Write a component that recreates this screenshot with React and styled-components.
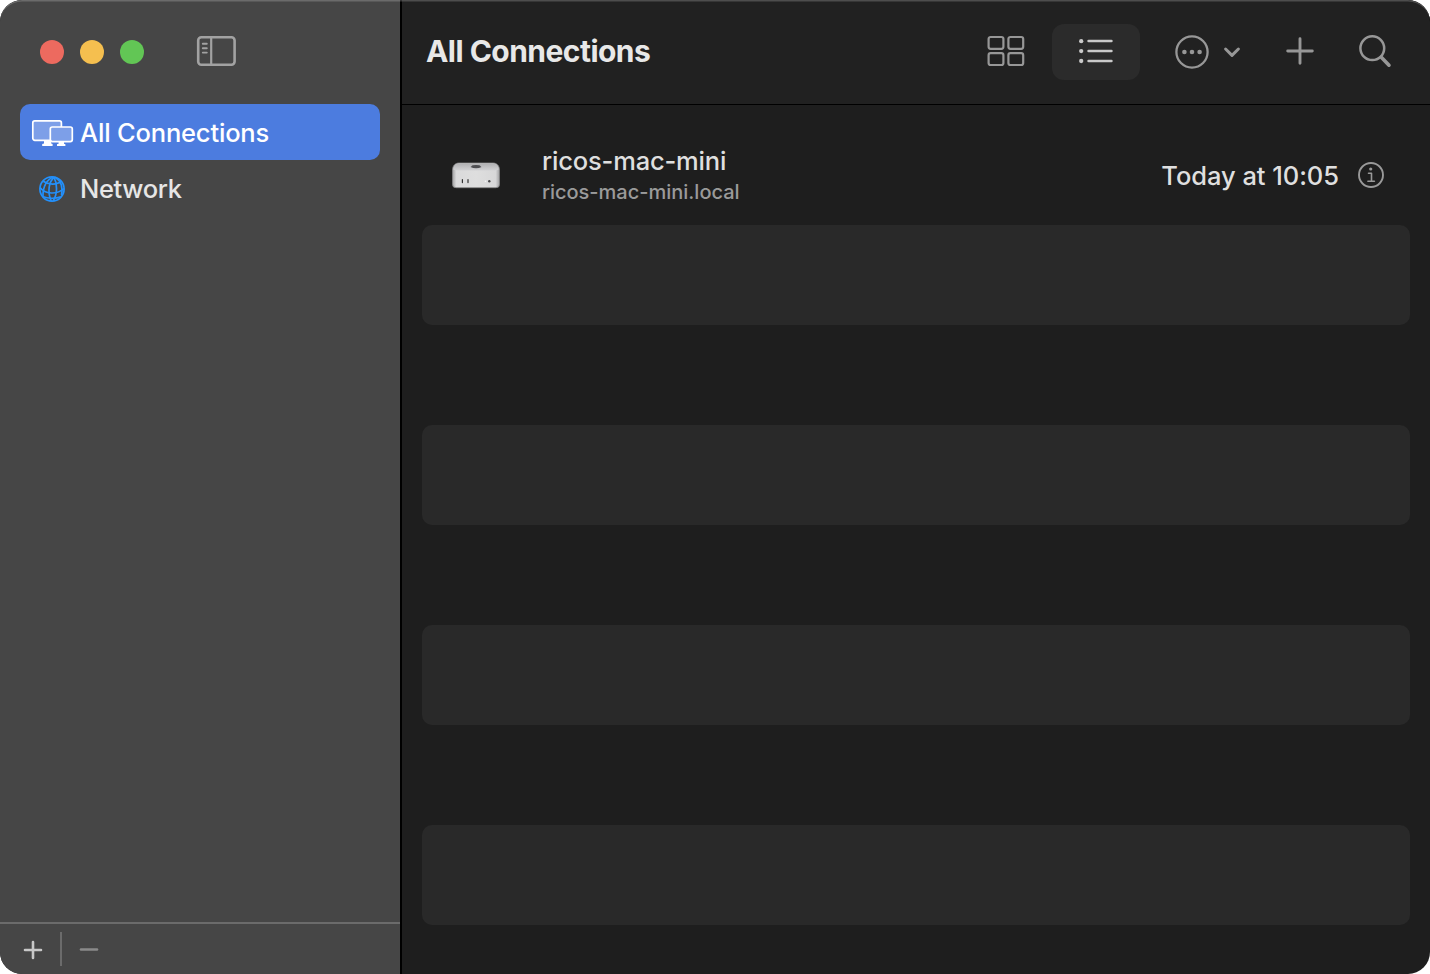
import React from "react";
import styled, { createGlobalStyle } from "styled-components";

const GlobalStyle = createGlobalStyle`
  *, *::before, *::after { box-sizing: border-box; }
  body {
    margin: 0;
    background: #fff;
    font-family: Inter, "Liberation Sans", sans-serif;
    overflow: hidden;
  }
  svg { display: block; flex: none; }
`;

const Window = styled.div`
  position: relative;
  display: flex;
  width: 1430px;
  height: 974px;
  border-radius: 22px;
  overflow: hidden;
  background: #1e1e1e;
  &::after {
    content: "";
    position: absolute;
    inset: 0;
    border-radius: 22px;
    pointer-events: none;
    box-shadow: inset 0 2px 0 -0.5px rgba(255, 255, 255, 0.2);
  }
`;

const Sidebar = styled.aside`
  display: flex;
  flex-direction: column;
  width: 402px;
  flex: none;
  background: #464646;
  border-right: 2px solid #000;
`;

const TitleBar = styled.div`
  display: flex;
  align-items: center;
  height: 104px;
  padding: 0 0 0 40px;
`;

const Lights = styled.div`
  display: flex;
  gap: 16px;
  margin-right: 52px;
`;

const Light = styled.span`
  width: 24px;
  height: 24px;
  border-radius: 50%;
  background: ${(p) => p.$color};
`;

const SidebarToggle = styled.span`
  margin-bottom: 2px;
`;

const Nav = styled.nav`
  flex: 1;
  padding: 0 20px;
`;

const NavItem = styled.div`
  display: flex;
  align-items: center;
  height: 56px;
  padding: 2px 0 0 10px;
  border-radius: 10px;
  color: ${(p) => (p.$selected ? "#fff" : "#e6e6e6")};
  background: ${(p) => (p.$selected ? "#4c7cdf" : "transparent")};
`;

const NavIcon = styled.span`
  display: flex;
  justify-content: center;
  width: 44px;
  margin-right: 6px;
`;

const Label = styled.span`
  font-size: ${(p) => p.$size}px;
  line-height: ${(p) => p.$line || 32}px;
  font-weight: ${(p) => p.$weight || 450};
  letter-spacing: ${(p) => p.$track || 0}px;
  color: ${(p) => p.$color || "inherit"};
  white-space: nowrap;
`;

const SidebarFooter = styled.footer`
  display: flex;
  align-items: center;
  height: 52px;
  border-top: 2px solid #6b6b6b;
  padding: 2px 0 0 23px;
`;

const FooterDivider = styled.span`
  width: 2px;
  height: 34px;
  margin: 0 17px 2px 17px;
  background: #6b6b6b;
`;

const Main = styled.main`
  display: flex;
  flex-direction: column;
  flex: 1;
  min-width: 0;
`;

const Toolbar = styled.header`
  display: flex;
  align-items: center;
  height: 104px;
  padding: 0 38px 2px 24px;
  background: #212121;
  box-shadow: 0 1px 0 #000;
`;

const Tools = styled.div`
  display: flex;
  align-items: center;
  margin-left: auto;
`;

const ViewButton = styled.span`
  display: flex;
  align-items: center;
  justify-content: center;
  width: 88px;
  height: 56px;
  margin: 2px 34.5px 0 27px;
  border-radius: 12px;
  background: #2b2b2b;
`;

const MenuButton = styled.span`
  display: flex;
  align-items: center;
  gap: 14.5px;
  margin: 2px 44.5px 0 0;
`;

const AddButton = styled.span`
  margin-bottom: 1px;
`;

const SearchButton = styled.span`
  margin-left: 44.5px;
`;

const List = styled.div`
  flex: 1;
  padding: 21px 20px 0;
  overflow: hidden;
`;

const Row = styled.div`
  display: flex;
  align-items: center;
  height: 100px;
  padding: 0 26px 0 29px;
  border-radius: 10px;
  background: ${(p) => (p.$striped ? "#292929" : "transparent")};
`;

const Host = styled.div`
  display: flex;
  flex-direction: column;
  margin-left: 41px;
  padding-top: 2px;
`;

const RowMeta = styled.div`
  display: flex;
  align-items: center;
  gap: 19px;
  margin-left: auto;
`;

const Time = styled.span`
  padding-top: 2px;
`;

const SidebarIcon = () => (
  <svg width="40" height="32" viewBox="0 0 40 32" fill="none" stroke="#a2a2a2">
    <rect x="2.2" y="2.2" width="36.4" height="27.6" rx="3.2" strokeWidth="2.6" />
    <path d="M15.2 2v28" strokeWidth="2.2" />
    <path d="M6.8 8.8h4M6.8 13.2h4M6.8 17.6h4" strokeWidth="1.9" strokeLinecap="round" />
  </svg>
);

const ScreensIcon = () => (
  <svg width="44" height="28" viewBox="0 0 44 28">
    <rect x="2.8" y="1.9" width="28.6" height="19.4" rx="2" fill="#7d9fe8" stroke="#fff" strokeWidth="1.7" />
    <path d="M14 21h7.2v3.4l1.4.6v2h-10.4v-2l1.8-.6z" fill="#fff" />
    <rect x="20.3" y="8" width="22" height="14.6" rx="2" fill="#7d9fe8" stroke="#fff" strokeWidth="1.7" />
    <path d="M28.6 22.6h5.4v2.2l1.4.4V27h-8.4v-1.8l1.6-.4z" fill="#fff" />
  </svg>
);

const GlobeIcon = () => (
  <svg width="26" height="26" viewBox="0 0 26 26" fill="none" stroke="#2390fb" strokeWidth="1.7">
    <circle cx="13" cy="13" r="12.1" />
    <path d="M15.5 1.2C10 5 8 15.5 12.2 25" />
    <path d="M14.5 1.2C8 3 3.5 10.5 4 21" />
    <path d="M15 1.2C18.5 8 18.5 18 14.2 24.8" />
    <path d="M16 1.2C22 4.5 24 11 22.5 19.5" />
    <path d="M4.2 5.3C9 8.8 18 9.3 22.2 5.2" />
    <path d="M1 11.5C6 18.3 18 19 25 12.5" />
    <path d="M3.6 20.5C9 22.8 17 22.8 21.8 20.8" />
  </svg>
);

const GridIcon = () => (
  <svg width="38" height="32" viewBox="0 0 38 32" fill="none" stroke="#979797" strokeWidth="2.2">
    <rect x="1.6" y="2" width="14.8" height="11.8" rx="2" />
    <rect x="21.4" y="2" width="14.8" height="11.8" rx="2" />
    <rect x="1.6" y="18.2" width="14.8" height="11.8" rx="2" />
    <rect x="21.4" y="18.2" width="14.8" height="11.8" rx="2" />
  </svg>
);

const ListIcon = () => (
  <svg width="34" height="26" viewBox="0 0 34 26" fill="#c9c9c9" stroke="#c9c9c9">
    <g stroke="none">
      <circle cx="2.2" cy="2.2" r="2.15" />
      <circle cx="2.2" cy="12.1" r="2.15" />
      <circle cx="2.2" cy="22" r="2.15" />
    </g>
    <path d="M9.5 2h23M9.5 12h23M9.5 22h23" strokeWidth="2.4" strokeLinecap="round" />
  </svg>
);

const MoreIcon = () => (
  <svg width="34" height="34" viewBox="0 0 34 34">
    <circle cx="17" cy="17" r="15.6" fill="none" stroke="#979797" strokeWidth="2.3" />
    <g fill="#979797">
      <circle cx="9.4" cy="17" r="2.3" />
      <circle cx="17" cy="17" r="2.3" />
      <circle cx="24.6" cy="17" r="2.3" />
    </g>
  </svg>
);

const ChevronIcon = () => (
  <svg width="18" height="12" viewBox="0 0 18 12" fill="none">
    <path d="M2.6 3L9 9.4L15.4 3" stroke="#979797" strokeWidth="3" strokeLinecap="round" strokeLinejoin="round" />
  </svg>
);

const PlusIcon = () => (
  <svg width="28" height="30" viewBox="0 0 28 30" fill="none">
    <path d="M14 2.7v24.6M1.7 15h24.6" stroke="#979797" strokeWidth="2.9" strokeLinecap="round" />
  </svg>
);

const SearchIcon = () => (
  <svg width="34" height="36" viewBox="0 0 34 36" fill="none" stroke="#979797" strokeLinecap="round">
    <circle cx="14.3" cy="15.2" r="11.9" strokeWidth="2.5" />
    <path d="M23.3 24.3L31 32.2" strokeWidth="3.6" />
  </svg>
);

const MacMiniIcon = () => (
  <svg width="50" height="30" viewBox="0 0 50 30">
    <defs>
      <linearGradient id="top" x1="0" y1="0" x2="0" y2="1">
        <stop offset="0" stopColor="#b0b0b2" />
        <stop offset="1" stopColor="#d2d2d4" />
      </linearGradient>
      <linearGradient id="front" x1="0" y1="0" x2="1" y2="0">
        <stop offset="0" stopColor="#a2a2a3" />
        <stop offset=".08" stopColor="#dadadb" />
        <stop offset=".5" stopColor="#dedede" />
        <stop offset=".92" stopColor="#d7d7d8" />
        <stop offset="1" stopColor="#a0a0a2" />
      </linearGradient>
    </defs>
    <path d="M8 3H42C46 3 48.5 6 48.5 10V24.5Q48.5 27.7 45 27.7H5Q1.5 27.7 1.5 24.5V10C1.5 6 4 3 8 3Z" fill="url(#front)" stroke="#858587" strokeWidth=".8" />
    <path d="M8 3.5H42C45.5 3.5 47.4 6 47.7 9.5Q46 10.5 43.5 10.5H6.5Q4 10.5 2.3 9.5C2.6 6 4.5 3.5 8 3.5Z" fill="url(#top)" />
    <path d="M20.5 6.2Q20.5 5 25 5Q29.5 5 29.5 6.2L30.5 7Q28 8.2 25 8.2Q22 8.2 19.5 7Z" fill="#4e4e51" />
    <path d="M11.4 19.6v3M17 19.6v3" stroke="#333" strokeWidth="1.2" strokeLinecap="round" />
    <circle cx="34.5" cy="21.2" r=".8" fill="#f6f6f6" />
    <circle cx="38.3" cy="21.2" r="1.2" fill="#4a4a4c" />
  </svg>
);

const InfoIcon = () => (
  <svg width="26" height="26" viewBox="0 0 26 26" fill="none" stroke="#999">
    <circle cx="13" cy="13" r="12" strokeWidth="1.9" />
    <circle cx="12.7" cy="7" r="1.6" fill="#999" stroke="none" />
    <path d="M10.5 11.2H13.5V19M9.9 19.2H16.4" strokeWidth="1.6" strokeLinecap="round" strokeLinejoin="round" />
  </svg>
);

const SmallPlusIcon = () => (
  <svg width="20" height="20" viewBox="0 0 20 20">
    <path d="M10 2v16M2 10h16" stroke="#c8c8c8" strokeWidth="2.6" strokeLinecap="round" />
  </svg>
);

const MinusIcon = () => (
  <svg width="20" height="20" viewBox="0 0 20 20">
    <path d="M2 9.5h16" stroke="#8a8a8a" strokeWidth="2.6" strokeLinecap="round" />
  </svg>
);

const emptyRows = Array.from({ length: 8 }, (_, i) => i % 2 === 0);

export default function App() {
  return (
    <>
      <GlobalStyle />
      <Window>
        <Sidebar>
          <TitleBar>
            <Lights>
              <Light $color="#ed6a5f" />
              <Light $color="#f5bf4f" />
              <Light $color="#62c655" />
            </Lights>
            <SidebarToggle><SidebarIcon /></SidebarToggle>
          </TitleBar>
          <Nav>
            <NavItem $selected>
              <NavIcon><ScreensIcon /></NavIcon>
              <Label $size={25.5} $track={-0.18}>All Connections</Label>
            </NavItem>
            <NavItem>
              <NavIcon><GlobeIcon /></NavIcon>
              <Label $size={25.5} $track={-0.35}>Network</Label>
            </NavItem>
          </Nav>
          <SidebarFooter>
            <SmallPlusIcon />
            <FooterDivider />
            <MinusIcon />
          </SidebarFooter>
        </Sidebar>
        <Main>
          <Toolbar>
            <Label $size={30} $weight={650} $track={-0.53} $color="#e8e8e8">All Connections</Label>
            <Tools>
              <GridIcon />
              <ViewButton><ListIcon /></ViewButton>
              <MenuButton><MoreIcon /><ChevronIcon /></MenuButton>
              <AddButton><PlusIcon /></AddButton>
              <SearchButton><SearchIcon /></SearchButton>
            </Tools>
          </Toolbar>
          <List>
            <Row>
              <MacMiniIcon />
              <Host>
                <Label $size={25.5} $line={32} $track={-0.18} $color="#dfdfdf">ricos-mac-mini</Label>
                <Label $size={20} $line={31} $track={-0.01} $color="#9a9a9a">ricos-mac-mini.local</Label>
              </Host>
              <RowMeta>
                <Time>
                  <Label $size={25.5} $track={-0.05} $color="#dfdfdf">Today at 10:05</Label>
                </Time>
                <InfoIcon />
              </RowMeta>
            </Row>
            {emptyRows.map((striped, i) => (
              <Row key={i} $striped={striped} />
            ))}
          </List>
        </Main>
      </Window>
    </>
  );
}
